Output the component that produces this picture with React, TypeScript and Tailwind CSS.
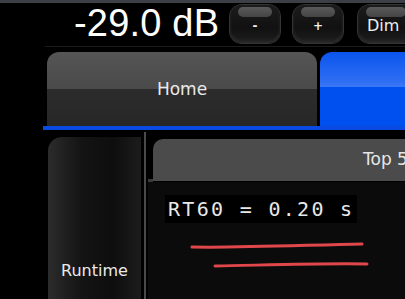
const sans = "font-['DejaVu_Sans',sans-serif]";

function HwButton({ label, wide }: { label: string; wide?: boolean }) {
  return (
    <div
      className={`relative h-[38px] shrink-0 rounded-[12px] bg-[linear-gradient(to_bottom,#1c1c1c,#111_60%,#1e1e1e)] shadow-[0_0_0_1px_#343434,inset_0_-2px_3px_#2c2c2c] ${
        wide ? "w-[56px]" : "w-[50px]"
      }`}
    >
      {/* top highlight pill */}
      <div className="absolute left-[8px] right-[8px] top-[2px] h-[10px] rounded-[6px] bg-[linear-gradient(to_bottom,#5a5a5a,#444)]" />
      <div
        className={`absolute inset-0 flex items-center justify-center pt-[4px] text-[#eee] ${sans} ${
          wide ? "justify-start pl-[9px] text-[16px]" : "text-[12px] font-bold"
        }`}
      >
        {label}
      </div>
    </div>
  );
}

export default function App() {
  return (
    <div className="relative flex h-[299px] w-[405px] flex-col overflow-hidden bg-black">
      {/* window edge */}
      <div className="h-[3px] shrink-0 bg-[#3c3f46]" />

      {/* level row */}
      <div className="flex h-[43px] shrink-0 items-start pl-[74px] pt-[2px]">
        <div className="mt-[-2px] w-[156px] shrink-0 whitespace-nowrap font-['Liberation_Sans',Arial,sans-serif] text-[38px] leading-[40px] tracking-[0.2px] text-white">
          -29.0 dB
        </div>
        <div className="flex shrink-0 gap-[13px]">
          <HwButton label="-" />
          <HwButton label="+" />
          <div className="ml-[2px]">
            <HwButton label="Dim" wide />
          </div>
        </div>
      </div>
      <div className="ml-[45px] h-px shrink-0 bg-[#1c1c1c]" />

      {/* main tabs */}
      <div className="mt-[5px] flex h-[74px] shrink-0 gap-[3px] pl-[47px]">
        <div
          className={`flex w-[270px] items-center justify-center pt-[2px] rounded-t-[12px] bg-[linear-gradient(to_bottom,#555_0%,#4a4a4a_50%,#2c2c2c_50%,#272727_100%)] text-[17px] text-[#eaeaea] ${sans}`}
        >
          Home
        </div>
        <div className="flex-1 rounded-tl-[12px] bg-[linear-gradient(to_bottom,#0a55ee_0%,#2f6ef3_40%,#3a78f5_47%,#0050f0_47%,#0050f0_100%)]" />
      </div>
      <div className="ml-[43px] h-[4px] shrink-0 bg-[#0a4ae2]" />

      {/* body */}
      <div className="flex min-h-0 flex-1 pl-[48px]">
        {/* side tab */}
        <div className="mt-[7px] w-[93px] shrink-0 rounded-tl-[14px] bg-[linear-gradient(to_right,#2c2c2c,#141414_35%,#0e0e0e_70%,#1c1c1c)]">
          <div className={`pt-[124px] text-center text-[16px] leading-[20px] text-[#eaeaea] ${sans}`}>
            Runtime
          </div>
        </div>

        {/* divider */}
        <div className="ml-[3px] mt-[2px] w-[2px] shrink-0 bg-[#4a4a4a]" />

        {/* content panel */}
        <div className="ml-[2px] flex min-w-0 flex-1 flex-col">
          <div className="mt-[9px] flex h-[43px] shrink-0">
            <div className="mt-auto h-[3px] w-[5px] shrink-0 bg-[#3a3a3a]" />
            <div
              className={`h-[42px] flex-1 overflow-hidden whitespace-nowrap rounded-tl-[10px] bg-[#4b4b4b] pl-[210px] pt-[10px] text-[17px] leading-[20px] text-[#e6e6e6] ${sans}`}
            >
              Top 5
            </div>
          </div>

          <div className="flex-1 bg-[#0b0b0b]">
            <div className="ml-[17px] mt-[13px] inline-block bg-black px-[3px] py-[3px] font-['DejaVu_Sans_Mono',monospace] text-[20px] leading-[22px] tracking-[2.3px] text-[#e8e8e8]">
              RT60 = 0.20 s
            </div>
            <svg width="257" height="50" viewBox="0 0 257 50" className="mt-[7px] block">
              <path
                d="M44 17 C 90 18, 160 15, 214 14"
                stroke="#e0474a"
                strokeWidth="3"
                strokeLinecap="round"
                fill="none"
              />
              <path
                d="M67 36 C 120 35, 180 33, 219 34"
                stroke="#e0474a"
                strokeWidth="3"
                strokeLinecap="round"
                fill="none"
              />
            </svg>
          </div>
        </div>
      </div>
    </div>
  );
}
